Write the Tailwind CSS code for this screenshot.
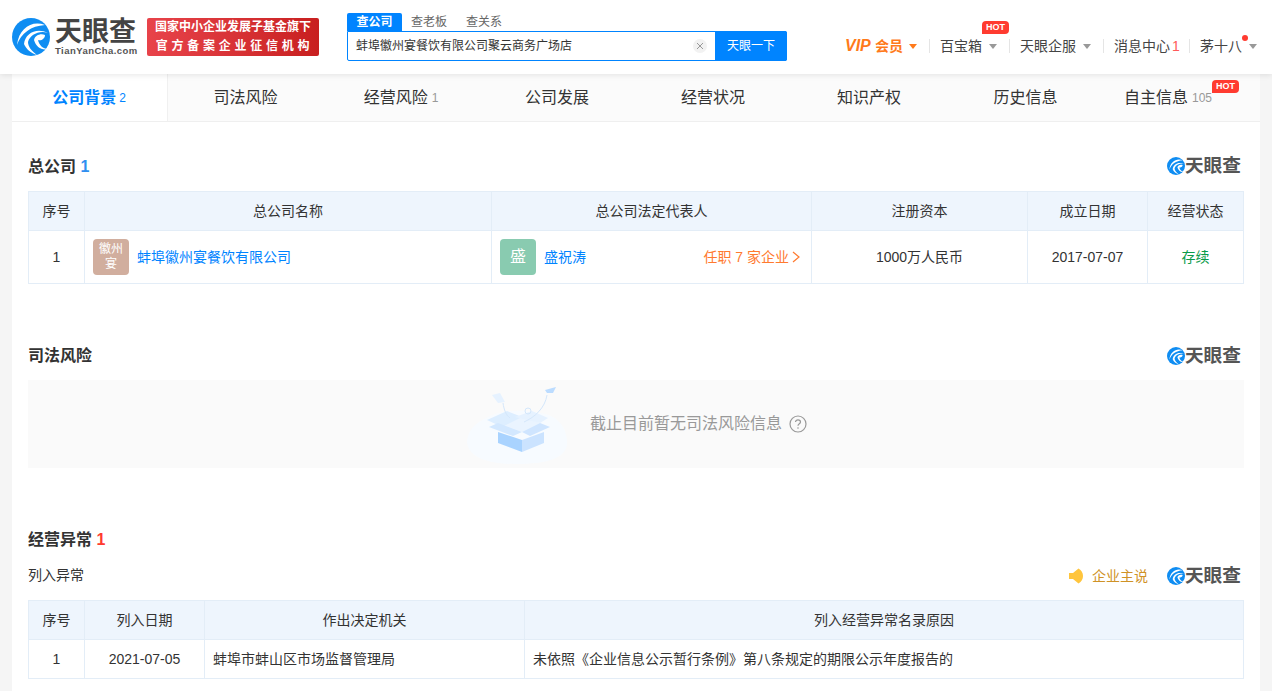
<!DOCTYPE html>
<html lang="zh-CN">

<head>
    <meta charset="UTF-8">
    <meta name="viewport" content="width=device-width, initial-scale=1.0">
    <title>天眼查</title>
    <script src="https://cdn.jsdelivr.net/npm/@tailwindcss/browser@4"></script>
</head>

<body class="bg-[#f5f5f5] text-[#333] text-[14px] font-['Liberation_Sans','Noto_Sans_CJK_SC',sans-serif] h-[691px] overflow-hidden">
    <header class="relative z-10 h-[74px] bg-white shadow-[0_1px_6px_rgba(0,0,0,0.1)] flex">
        <!-- logo -->
        <a class="flex items-center ml-[12px] w-[123px] h-[38px] mt-[18px]">
            <svg class="w-[38px] h-[38px] shrink-0" viewBox="0 0 38 38">
                <circle cx="19" cy="19" r="19" fill="#0f8df2"/>
                <path d="M33 7C20 2 7 10 5 27C9 15 19 8 33 7Z" fill="#fff"/>
                <path d="M36 15C25 9 13 15 12 26C14 31 19 35 25 37C20 33 16 29 16 24C18 17 27 12 36 15Z" fill="#fff"/>
                <path d="M22 22C23 17 29 15 33 17C33 21 29 23 26 22C27 27 31 31 36 31C30 33 24 29 22 22Z" fill="#fff"/>
            </svg>
            <div class="ml-[5px] w-[80px] shrink-0 -mt-[1px]">
                <div class="text-[27px] leading-[28px] font-bold text-[#444] whitespace-nowrap">天眼查</div>
                <div class="text-[9.5px] leading-[10px] font-bold text-[#555] tracking-[0.45px] whitespace-nowrap">TianYanCha.com</div>
            </div>
        </a>
        <!-- red badge -->
        <div class="ml-[12px] mt-[18px] w-[172px] h-[38px] rounded-[2px] bg-gradient-to-r from-[#e8434a] to-[#c81f1f] text-white text-[12px] font-bold text-center leading-[19px]">
            <div class="whitespace-nowrap">国家中小企业发展子基金旗下</div>
            <div class="whitespace-nowrap tracking-[3.75px] pl-[3px]">官方备案企业征信机构</div>
        </div>
        <!-- search -->
        <div class="ml-[28px] mt-[13px] w-[440px]">
            <div class="flex h-[18px] text-[12px] leading-[18px] text-[#666]">
                <span class="w-[55px] bg-[#0084ff] text-white text-center font-bold rounded-t-[2px]">查公司</span>
                <span class="ml-[9px]">查老板</span>
                <span class="ml-[19px]">查关系</span>
            </div>
            <div class="flex h-[30px] border border-[#0084ff] rounded-b-[2px] rounded-tr-[2px]">
                <div class="flex-1 flex items-center pl-[8px] pr-[8px] text-[12px] text-[#333]">
                    <span class="flex-1">蚌埠徽州宴餐饮有限公司聚云商务广场店</span>
                    <span class="w-[14px] h-[14px] rounded-full bg-[#f2f2f2] flex items-center justify-center">
                        <svg class="w-[8px] h-[8px]" viewBox="0 0 8 8"><path d="M1 1L7 7M7 1L1 7" stroke="#999" stroke-width="1"/></svg>
                    </span>
                </div>
                <div class="w-[72px] -my-px -mr-px bg-[#0084ff] text-white text-[12px] flex items-center justify-center rounded-r-[2px]">天眼一下</div>
            </div>
        </div>
        <!-- right nav -->
        <nav class="absolute left-[845px] top-[37px] h-[18px] flex items-center text-[14px] text-[#444] whitespace-nowrap">
            <span class="w-[58px] font-bold text-[#ff7a1a] flex items-center"><em class="w-[30px] text-[16px]">VIP</em>会员</span>
            <i class="ml-[6px] border-x-[4px] border-x-transparent border-t-[5px] border-t-[#ff7a1a]"></i>
            <i class="ml-[12px] w-px h-[14px] bg-[#e5e5e5]"></i>
            <span class="relative ml-[10px]">百宝箱
                <b class="absolute left-[42px] -top-[15px] w-[27px] h-[13px] bg-[#ff3b30] text-white text-[9px] leading-[13px] text-center rounded-[4px_4px_4px_0]">HOT</b>
            </span>
            <i class="ml-[7px] border-x-[4px] border-x-transparent border-t-[5px] border-t-[#999]"></i>
            <i class="ml-[12px] w-px h-[14px] bg-[#e5e5e5]"></i>
            <span class="ml-[10px]">天眼企服</span>
            <i class="ml-[7px] border-x-[4px] border-x-transparent border-t-[5px] border-t-[#999]"></i>
            <i class="ml-[12px] w-px h-[14px] bg-[#e5e5e5]"></i>
            <span class="ml-[10px]">消息中心</span>
            <span class="ml-[2px] w-[8px] text-[#ff5a5a]">1</span>
            <i class="ml-[9px] w-px h-[14px] bg-[#e5e5e5]"></i>
            <span class="relative ml-[10px]">茅十八
                <b class="absolute left-[42px] -top-[1px] w-[6px] h-[6px] rounded-full bg-[#ff3b30]"></b>
            </span>
            <i class="ml-[7px] border-x-[4px] border-x-transparent border-t-[5px] border-t-[#999]"></i>
        </nav>
    </header>

    <main class="mx-[12px] bg-white h-[617px] overflow-hidden">
        <!-- tabs -->
        <div class="grid grid-cols-8 h-[48px] text-[16px] border-b border-[#efefef] bg-[#fbfbfb] text-[#333]">
            <div class="bg-white text-[#0084ff] font-bold flex items-center justify-center border-r border-[#f0f0f0] pr-[1px]">公司背景<span class="ml-[3px] text-[12px] font-normal">2</span></div>
            <div class="flex items-center justify-center pr-[1px]">司法风险</div>
            <div class="flex items-center justify-center pr-[2px]">经营风险<span class="ml-[4px] text-[12px] text-[#999]">1</span></div>
            <div class="flex items-center justify-center pr-[2px]">公司发展</div>
            <div class="flex items-center justify-center pr-[2px]">经营状况</div>
            <div class="flex items-center justify-center pr-[2px]">知识产权</div>
            <div class="flex items-center justify-center pr-[1px]">历史信息</div>
            <div class="relative flex items-center justify-center pr-[28px]">自主信息<span class="ml-[4px] text-[12px] text-[#999]">105</span>
                <b class="absolute left-[108px] top-[6px] w-[27px] h-[13px] bg-[#ff3b30] text-white text-[9px] leading-[13px] text-center rounded-[4px_4px_4px_0]">HOT</b>
            </div>
        </div>

        <div class="px-[16px]">
            <!-- 总公司 -->
            <section class="pt-[32px]">
                <div class="flex items-center justify-between h-[24px] mb-[13px]">
                    <h2 class="mt-[1px] text-[16px] font-bold">总公司 <span class="text-[#2f8ff0]">1</span></h2>
                    <div class="flex items-center pr-[3px]">
                        <svg class="w-[18px] h-[18px]" viewBox="0 0 38 38">
                            <circle cx="19" cy="19" r="19" fill="#0f8df2"/>
                            <path d="M33 7C20 2 7 10 5 27C9 15 19 8 33 7Z" fill="#fff"/>
                            <path d="M36 15C25 9 13 15 12 26C14 31 19 35 25 37C20 33 16 29 16 24C18 17 27 12 36 15Z" fill="#fff"/>
                            <path d="M22 22C23 17 29 15 33 17C33 21 29 23 26 22C27 27 31 31 36 31C30 33 24 29 22 22Z" fill="#fff"/>
                        </svg>
                        <span class="text-[18.7px] font-bold text-[#555] leading-[20px]">天眼查</span>
                    </div>
                </div>
                <table class="w-full table-fixed border-collapse text-center text-[14px]">
                    <colgroup>
                        <col class="w-[56px]"><col class="w-[407px]"><col class="w-[320px]"><col class="w-[216px]"><col class="w-[120px]"><col>
                    </colgroup>
                    <thead class="bg-[#eef5fd]">
                        <tr class="h-[39px]">
                            <th class="font-normal border border-[#e3edf7]">序号</th>
                            <th class="font-normal border border-[#e3edf7]">总公司名称</th>
                            <th class="font-normal border border-[#e3edf7]">总公司法定代表人</th>
                            <th class="font-normal border border-[#e3edf7]">注册资本</th>
                            <th class="font-normal border border-[#e3edf7]">成立日期</th>
                            <th class="font-normal border border-[#e3edf7]">经营状态</th>
                        </tr>
                    </thead>
                    <tbody>
                        <tr class="h-[53px]">
                            <td class="border border-[#e3edf7]">1</td>
                            <td class="border border-[#e3edf7] px-[8px]">
                                <div class="flex items-center text-left">
                                    <div class="w-[36px] h-[36px] rounded-[4px] bg-[#d1ae9e] text-white text-[12px] leading-[15px] flex items-center justify-center text-center">徽州<br>宴</div>
                                    <a class="ml-[8px] text-[#0084ff]">蚌埠徽州宴餐饮有限公司</a>
                                </div>
                            </td>
                            <td class="border border-[#e3edf7] pl-[8px] pr-[10px]">
                                <div class="flex items-center text-left">
                                    <div class="w-[36px] h-[36px] rounded-[4px] bg-[#89cbb0] text-white text-[16px] flex items-center justify-center">盛</div>
                                    <a class="ml-[8px] text-[#0084ff]">盛祝涛</a>
                                    <span class="ml-auto text-[#ff7a2f] flex items-center whitespace-nowrap">任职 7 家企业
                                        <svg class="ml-[2px] w-[10px] h-[12px]" viewBox="0 0 10 12"><path d="M2 1L8 6L2 11" fill="none" stroke="#ff7a2f" stroke-width="1.2"/></svg>
                                    </span>
                                </div>
                            </td>
                            <td class="border border-[#e3edf7]">1000万人民币</td>
                            <td class="border border-[#e3edf7]">2017-07-07</td>
                            <td class="border border-[#e3edf7] text-[#0a9b4a]">存续</td>
                        </tr>
                    </tbody>
                </table>
            </section>

            <!-- 司法风险 -->
            <section class="mt-[60px]">
                <div class="flex items-center justify-between h-[24px] mb-[12px]">
                    <h2 class="text-[16px] font-bold">司法风险</h2>
                    <div class="flex items-center pr-[3px]">
                        <svg class="w-[18px] h-[18px]" viewBox="0 0 38 38">
                            <circle cx="19" cy="19" r="19" fill="#0f8df2"/>
                            <path d="M33 7C20 2 7 10 5 27C9 15 19 8 33 7Z" fill="#fff"/>
                            <path d="M36 15C25 9 13 15 12 26C14 31 19 35 25 37C20 33 16 29 16 24C18 17 27 12 36 15Z" fill="#fff"/>
                            <path d="M22 22C23 17 29 15 33 17C33 21 29 23 26 22C27 27 31 31 36 31C30 33 24 29 22 22Z" fill="#fff"/>
                        </svg>
                        <span class="text-[18.7px] font-bold text-[#555] leading-[20px]">天眼查</span>
                    </div>
                </div>
                <div class="h-[88px] bg-[#fafafa] flex items-center pl-[437px]">
                    <svg class="w-[106px] h-[88px] shrink-0" viewBox="0 0 106 88">
                        <path d="M2 62C3 46 16 40 30 34C46 29 70 30 86 36C98 42 103 54 102 66C98 78 84 84 50 84C20 84 3 76 2 62Z" fill="#f7fbff"/>
                        <path d="M33 43L57 37L75 43L57 52Z" fill="#eaf4ff"/>
                        <path d="M22 40L42 31L57 37L37 47Z" fill="#ddeeff"/>
                        <path d="M50 37L67 31L83 38L75 43Z" fill="#e6f2ff"/>
                        <path d="M24 47L33 43L57 52L48 56Z" fill="#d3e8ff"/>
                        <path d="M85 47L75 43L57 52L65 56Z" fill="#cfe5ff"/>
                        <path d="M33 52L57 60V72L33 63Z" fill="#a9d3ff"/>
                        <path d="M57 60L79 52V63L57 72Z" fill="#cbe3ff"/>
                        <path d="M38 23C39 30 41 35 45 38M82 15C80 28 70 37 59 42" fill="none" stroke="#d4e7fb" stroke-width="1"/>
                        <circle cx="63" cy="31" r="3" fill="none" stroke="#d4e7fb" stroke-width="1"/>
                        <path d="M27 15L35 13L40 22L33 23Z" fill="#e6f2ff"/>
                        <path d="M80 10L91 7L88 13L82 13Z" fill="#bcdcff"/>
                    </svg>
                    <span class="ml-[19px] text-[16px] text-[#999]">截止目前暂无司法风险信息</span>
                    <svg class="ml-[7px] w-[18px] h-[18px]" viewBox="0 0 18 18">
                        <circle cx="9" cy="9" r="8" fill="none" stroke="#999" stroke-width="1.2"/>
                        <path d="M6.5 7C6.5 5.6 7.6 4.8 9 4.8C10.4 4.8 11.5 5.6 11.5 6.9C11.5 8.7 9 8.7 9 10.8" fill="none" stroke="#999" stroke-width="1.2"/>
                        <circle cx="9" cy="13" r="0.8" fill="#999"/>
                    </svg>
                </div>
            </section>

            <!-- 经营异常 -->
            <section class="mt-[60px]">
                <div class="flex items-center h-[24px]">
                    <h2 class="text-[16px] font-bold">经营异常 <span class="text-[#ff3b30]">1</span></h2>
                </div>
                <div class="flex items-center h-[24px] mt-[12px] mb-[12px]">
                    <span class="-mt-[2px]">列入异常</span>
                    <svg class="ml-auto w-[16px] h-[16px]" viewBox="0 0 16 16">
                        <path d="M1 5H5L10.5 0.5C13.5 2 15 5 15 8C15 11 13.5 14 10.5 15.5L5 11H1Z" fill="#ffc53d"/>
                    </svg>
                    <span class="ml-[8px] text-[#cf9226]">企业主说</span>
                    <div class="flex items-center ml-[19px] pr-[3px]">
                        <svg class="w-[18px] h-[18px]" viewBox="0 0 38 38">
                            <circle cx="19" cy="19" r="19" fill="#0f8df2"/>
                            <path d="M33 7C20 2 7 10 5 27C9 15 19 8 33 7Z" fill="#fff"/>
                            <path d="M36 15C25 9 13 15 12 26C14 31 19 35 25 37C20 33 16 29 16 24C18 17 27 12 36 15Z" fill="#fff"/>
                            <path d="M22 22C23 17 29 15 33 17C33 21 29 23 26 22C27 27 31 31 36 31C30 33 24 29 22 22Z" fill="#fff"/>
                        </svg>
                        <span class="text-[18.7px] font-bold text-[#555] leading-[20px]">天眼查</span>
                    </div>
                </div>
                <table class="w-full table-fixed border-collapse text-center text-[14px]">
                    <colgroup>
                        <col class="w-[56px]"><col class="w-[120px]"><col class="w-[320px]"><col>
                    </colgroup>
                    <thead class="bg-[#eef5fd]">
                        <tr class="h-[39px]">
                            <th class="font-normal border border-[#e3edf7]">序号</th>
                            <th class="font-normal border border-[#e3edf7]">列入日期</th>
                            <th class="font-normal border border-[#e3edf7]">作出决定机关</th>
                            <th class="font-normal border border-[#e3edf7]">列入经营异常名录原因</th>
                        </tr>
                    </thead>
                    <tbody>
                        <tr class="h-[39px]">
                            <td class="border border-[#e3edf7]">1</td>
                            <td class="border border-[#e3edf7]">2021-07-05</td>
                            <td class="border border-[#e3edf7] text-left px-[8px]">蚌埠市蚌山区市场监督管理局</td>
                            <td class="border border-[#e3edf7] text-left px-[8px]">未依照《企业信息公示暂行条例》第八条规定的期限公示年度报告的</td>
                        </tr>
                    </tbody>
                </table>
            </section>
        </div>
    </main>
</body>

</html>
